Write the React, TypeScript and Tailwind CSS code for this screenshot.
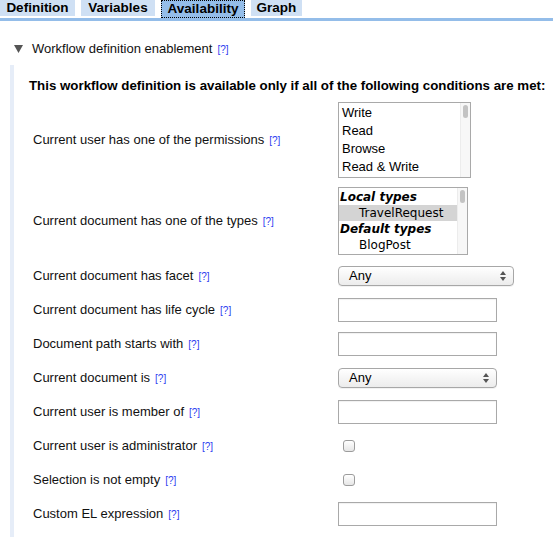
import React from "react";

const Help = () => (
  <span className="ml-[5px] text-[10px] text-[#2b3cf0]" style={{ fontFamily: '"Liberation Sans", Arial, sans-serif' }}>
    [?]
  </span>
);

const Arrows = () => (
  <svg width="6" height="10" viewBox="0 0 6 10" className="block">
    <path d="M3 0 L6 4 L0 4 Z" fill="#555" />
    <path d="M0 6 L6 6 L3 10 Z" fill="#555" />
  </svg>
);

const SelectBox = ({ w }: { w: string }) => (
  <div
    className={`${w} h-[20px] rounded-[4px] border border-[#a7a7a7] bg-gradient-to-b from-white to-[#ececec] flex items-center justify-between pl-[10px] pr-[7px] text-[13px] text-black shadow-[0_1px_0_rgba(0,0,0,0.05)]`}
  >
    <span>Any</span>
    <Arrows />
  </div>
);

const TextBox = () => (
  <div className="w-[159px] h-[24px] border border-[#a9a9a9] bg-white shadow-[inset_0_1px_1px_rgba(0,0,0,0.06)]" />
);

const Check = () => (
  <div className="ml-[5px] w-[12px] h-[12px] rounded-[3px] border border-[#9c9c9c] bg-gradient-to-b from-white to-[#e6e6e6]" />
);

const Row = ({ label, children, pad = "py-[5px]" }: { label: string; children: React.ReactNode; pad?: string }) => (
  <div className={`flex items-center min-h-[34px] ${pad}`}>
    <div className="w-[305px] shrink-0 flex items-baseline text-[13px] text-[#111]">
      <span>{label}</span>
      <Help />
    </div>
    <div>{children}</div>
  </div>
);

export default function App() {
  const tabs = [
    { n: "Definition", w: "w-[75px]", active: false },
    { n: "Variables", w: "w-[74px]", active: false },
    { n: "Availability", w: "w-[84px]", active: true },
    { n: "Graph", w: "w-[51px]", active: false },
  ];
  return (
    <div
      className="w-[553px] h-[549px] bg-white overflow-hidden"
      style={{ fontFamily: '"Liberation Sans", Arial, sans-serif' }}
    >
      {/* Tabs */}
      <div className="flex gap-[6px] h-[18px]">
        {tabs.map((t) =>
          t.active ? (
            <div
              key={t.n}
              className={`${t.w} h-[18px] bg-[#94bde9] border border-dotted border-black flex items-start justify-center text-[13.5px] font-bold text-black leading-[15px]`}
            >
              {t.n}
            </div>
          ) : (
            <div
              key={t.n}
              className={`${t.w} h-[16px] bg-[#cfe0f4] flex items-start justify-center text-[13.5px] font-bold text-black leading-[16px]`}
            >
              {t.n}
            </div>
          )
        )}
      </div>
      <div className="h-[3px] bg-[#94bde9]" />

      {/* Header */}
      <div className="mt-[20px] h-[16px] flex items-center">
        <svg width="9" height="8" viewBox="0 0 9 8" className="ml-[14px]">
          <path d="M0 0 L9 0 L4.5 8 Z" fill="#555" />
        </svg>
        <span className="ml-[9px] text-[13px] text-[#111]">Workflow definition enablement</span>
        <Help />
      </div>

      {/* Section */}
      <div className="mt-[8px] ml-[10px] border-l-4 border-[#e6edf8] pt-[13px] pb-[6px]">
        <div className="ml-[15px] h-[16px] leading-[16px] text-[13.3px] font-bold text-black mb-[3px] whitespace-nowrap">
          This workflow definition is available only if all of the following conditions are met:
        </div>
        <div className="ml-[19px]">
          <Row label="Current user has one of the permissions" pad="pt-[5px] pb-[4px]">
            <div className="relative w-[133px] h-[76px] border border-[#a9a9a9] bg-white pl-[3px] pt-[1px] text-[13px] leading-[18px] text-black">
              <div>Write</div>
              <div>Read</div>
              <div>Browse</div>
              <div>Read &amp; Write</div>
              <div className="absolute right-0 top-0 bottom-0 w-[10px] bg-[#f7f7f7] border-l border-[#ececec]">
                <div className="mx-auto mt-[2px] w-[5px] h-[13px] rounded-full bg-[#c3c3c3]" />
              </div>
            </div>
          </Row>
          <Row label="Current document has one of the types" pad="pt-[5px] pb-[4px]">
            <div
              className="relative w-[130px] h-[68px] border border-[#a9a9a9] bg-white pt-[1px] text-[12px] leading-[16px] text-black"
              style={{ fontFamily: '"DejaVu Sans", Verdana, sans-serif' }}
            >
              <div className="pl-[1px] font-bold italic">Local types</div>
              <div className="mr-[10px] bg-[#d4d4d4] pl-[20px]">TravelRequest</div>
              <div className="pl-[1px] font-bold italic">Default types</div>
              <div className="pl-[20px]">BlogPost</div>
              <div className="absolute right-0 top-0 bottom-0 w-[10px] bg-[#f7f7f7] border-l border-[#ececec]">
                <div className="mx-auto mt-[2px] w-[5px] h-[13px] rounded-full bg-[#c3c3c3]" />
              </div>
            </div>
          </Row>
          <Row label="Current document has facet">
            <SelectBox w="w-[176px]" />
          </Row>
          <Row label="Current document has life cycle">
            <TextBox />
          </Row>
          <Row label="Document path starts with">
            <TextBox />
          </Row>
          <Row label="Current document is">
            <SelectBox w="w-[159px]" />
          </Row>
          <Row label="Current user is member of">
            <TextBox />
          </Row>
          <Row label="Current user is administrator">
            <Check />
          </Row>
          <Row label="Selection is not empty">
            <Check />
          </Row>
          <Row label="Custom EL expression">
            <TextBox />
          </Row>
        </div>
      </div>
    </div>
  );
}
